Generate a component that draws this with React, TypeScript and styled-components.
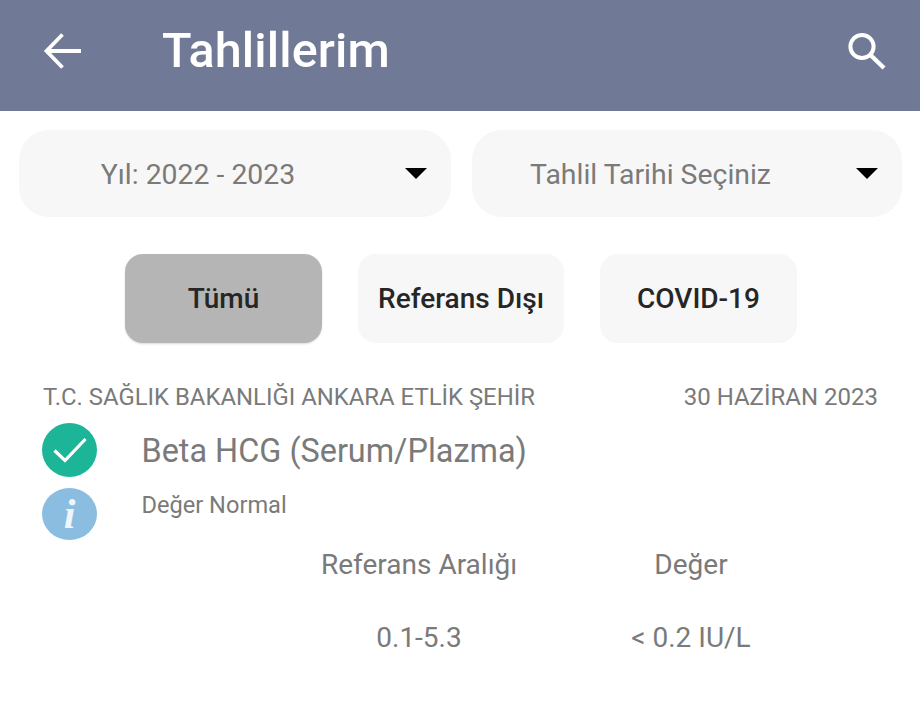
import React from 'react';
import styled, { createGlobalStyle } from 'styled-components';

const GlobalStyle = createGlobalStyle`
  html, body {
    margin: 0;
    padding: 0;
    background: #fff;
    font-family: Roboto, "Liberation Sans", sans-serif;
  }
`;

const filters = ['Tümü', 'Referans Dışı', 'COVID-19'];

const App = () => (
  <Page>
    <GlobalStyle />
    <Header>
      <IconButton aria-label="Geri">
        <svg width="40" height="38" viewBox="0 0 40 38" fill="none" stroke="#fff" strokeWidth="3.8">
          <path d="M38 19H4" />
          <path d="M19.5 2.5 3.5 19l16 16.5" />
        </svg>
      </IconButton>
      <Title>Tahlillerim</Title>
      <SearchButton aria-label="Ara">
        <svg width="40" height="40" viewBox="0 0 40 40" fill="none" stroke="#fff">
          <circle cx="16" cy="15.5" r="11.6" strokeWidth="4" />
          <path d="M24.5 24 38 37" strokeWidth="4.4" />
        </svg>
      </SearchButton>
    </Header>

    <SelectRow>
      <Select>
        <SelectLabel $shift={28}>Yıl: 2022 - 2023</SelectLabel>
        <Caret />
      </Select>
      <Select>
        <SelectLabel $shift={27}>Tahlil Tarihi Seçiniz</SelectLabel>
        <Caret />
      </Select>
    </SelectRow>

    <FilterRow>
      {filters.map((f, i) => (
        <FilterButton key={f} $active={i === 0} $wide={f === 'Referans Dışı'}>
          {f}
        </FilterButton>
      ))}
    </FilterRow>

    <Result>
      <ResultHead>
        <HospitalName>T.C. SAĞLIK BAKANLIĞI ANKARA ETLİK ŞEHİR</HospitalName>
        <ResultDate>30 HAZİRAN 2023</ResultDate>
      </ResultHead>
      <ResultBody>
        <Badges>
          <CheckBadge>
            <svg width="36" height="30" viewBox="0 0 36 30" fill="none" stroke="#fff" strokeWidth="3.2">
              <path d="M2.5 15.5 13 25.5 33.5 4" />
            </svg>
          </CheckBadge>
          <InfoBadge>i</InfoBadge>
        </Badges>
        <ResultText>
          <TestName>Beta HCG (Serum/Plazma)</TestName>
          <TestStatus>Değer Normal</TestStatus>
        </ResultText>
      </ResultBody>
      <ValueTable>
        <HeadCell>Referans Aralığı</HeadCell>
        <HeadCell>Değer</HeadCell>
        <ValueCell>0.1-5.3</ValueCell>
        <ValueCell>&lt; 0.2 IU/L</ValueCell>
      </ValueTable>
    </Result>
  </Page>
);

export default App;

const Page = styled.div`
  width: 920px;
  height: 706px;
  overflow: hidden;
  background: #fff;
`;

const Header = styled.header`
  height: 111px;
  background: #707995;
  display: flex;
  align-items: center;
  padding: 0 34px 10px 43px;
  box-sizing: border-box;
`;

const IconButton = styled.div`
  width: 119px;
  display: flex;
  align-items: center;
  height: 38px;
`;

const SearchButton = styled.div`
  margin-left: auto;
  display: flex;
  height: 40px;
`;

const Title = styled.h1`
  margin: 0;
  color: #fff;
  font-size: 48.5px;
  font-weight: 500;
  line-height: 56px;
  letter-spacing: 0.1px;
`;

const SelectRow = styled.div`
  display: grid;
  grid-template-columns: 432px 430px;
  gap: 21px;
  padding: 19px 18px 0 19px;
`;

const Select = styled.div`
  height: 87px;
  border-radius: 30px;
  background: #f7f7f7;
  display: flex;
  align-items: center;
  box-sizing: border-box;
  padding-right: 24px;
`;

const SelectLabel = styled.span<{ $shift: number }>`
  flex: 1;
  text-align: center;
  color: #7a7a7a;
  font-size: 28.4px;
  line-height: 34px;
  padding-top: 2px;
  padding-right: ${(p) => p.$shift}px;
`;

const Caret = styled.span`
  width: 0;
  height: 0;
  border-left: 11px solid transparent;
  border-right: 11px solid transparent;
  border-top: 11px solid #000;
`;

const FilterRow = styled.div`
  display: flex;
  gap: 36px;
  padding: 37px 0 0 125px;
`;

const FilterButton = styled.div<{ $active?: boolean; $wide?: boolean }>`
  width: ${(p) => (p.$wide ? '206px' : '197px')};
  height: 89px;
  border-radius: 18px;
  display: flex;
  align-items: center;
  justify-content: center;
  background: ${(p) => (p.$active ? '#b5b5b5' : '#f7f7f7')};
  color: #262626;
  font-size: 28px;
  font-weight: 500;
  box-shadow: ${(p) => (p.$active ? '0 1px 2px rgba(0, 0, 0, 0.15)' : 'none')};
`;

const Result = styled.section`
  padding: 37px 42px 0 42px;
`;

const ResultHead = styled.div`
  display: flex;
  justify-content: space-between;
  color: #7a7a7a;
  line-height: 34px;
  padding-left: 1px;
`;

const HospitalName = styled.span`
  font-size: 23.9px;
`;

const ResultDate = styled.span`
  font-size: 24px;
`;

const ResultBody = styled.div`
  display: flex;
  gap: 44.5px;
  padding-top: 9px;
`;

const Badges = styled.div`
  display: flex;
  flex-direction: column;
  gap: 11px;
`;

const CheckBadge = styled.div`
  width: 55px;
  height: 54px;
  border-radius: 50%;
  background: #1cb597;
  display: flex;
  align-items: center;
  justify-content: center;
`;

const InfoBadge = styled.div`
  width: 55px;
  height: 52px;
  border-radius: 50%;
  background: #8abde0;
  display: flex;
  align-items: center;
  justify-content: center;
  color: #eef6fb;
  font-family: "Liberation Serif", serif;
  font-style: italic;
  font-weight: 700;
  font-size: 42px;
  line-height: 1;
`;

const ResultText = styled.div`
  display: flex;
  flex-direction: column;
  gap: 13px;
  padding-top: 1px;
`;

const TestName = styled.div`
  color: #7a7a7a;
  font-size: 32.4px;
  line-height: 54px;
`;

const TestStatus = styled.div`
  color: #7a7a7a;
  font-size: 23.6px;
  line-height: 28px;
`;

const ValueTable = styled.div`
  display: grid;
  grid-template-columns: 196px 120px;
  justify-content: start;
  column-gap: 114px;
  row-gap: 40px;
  padding: 8px 0 0 279px;
`;

const HeadCell = styled.div`
  color: #7a7a7a;
  font-size: 28px;
  line-height: 33px;
  text-align: center;
  white-space: nowrap;
`;

const ValueCell = styled(HeadCell)``;
